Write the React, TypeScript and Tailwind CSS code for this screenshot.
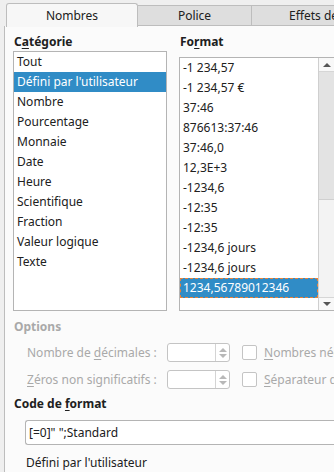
const categories = [
  'Tout',
  "Défini par l'utilisateur",
  'Nombre',
  'Pourcentage',
  'Monnaie',
  'Date',
  'Heure',
  'Scientifique',
  'Fraction',
  'Valeur logique',
  'Texte',
]

const formats = [
  '-1 234,57',
  '-1 234,57 €',
  '37:46',
  '876613:37:46',
  '37:46,0',
  '12,3E+3',
  '-1234,6',
  '-12:35',
  '-12:35',
  '-1234,6 jours',
  '-1234,6 jours',
  '1234,56789012346',
]

function SpinBox() {
  return (
    <div className="w-[63px] h-[19px] shrink-0 flex border border-[#c4c4c4] rounded-[3px] bg-white">
      <div className="flex-1" />
      <div className="w-[14px] flex flex-col items-center justify-center gap-[2px] border-l border-[#d4d4d4]">
        <div className="w-0 h-0 border-l-[4px] border-r-[4px] border-b-[4px] border-l-transparent border-r-transparent border-b-[#b8b8b8]" />
        <div className="w-0 h-0 border-l-[4px] border-r-[4px] border-t-[4px] border-l-transparent border-r-transparent border-t-[#b8b8b8]" />
      </div>
    </div>
  )
}

export default function App() {
  return (
    <div
      className="w-[334px] h-[472px] overflow-hidden bg-[#efefef] text-[12px] text-[#202020] flex flex-col"
      style={{ fontFamily: '"Noto Sans", "Open Sans", sans-serif' }}
    >
      {/* tabs */}
      <div className="h-[26px] flex items-end pl-[6px] shrink-0">
        <div className="w-[132px] h-[24px] shrink-0 bg-[#f7f7f7] border border-b-0 border-[#bdbdbd] rounded-t-[3px] flex items-center justify-center relative top-[1px] z-10">
          Nombres
        </div>
        <div className="w-[114px] h-[21px] shrink-0 bg-[#dedede] border border-l-0 border-[#bdbdbd] flex items-center justify-center">
          Police
        </div>
        <div className="flex-1 h-[21px] bg-[#dedede] border border-l-0 border-r-0 border-[#bdbdbd] flex items-center pl-[37px] whitespace-nowrap overflow-hidden">
          Effets de caractère
        </div>
      </div>

      {/* panel */}
      <div className="flex-1 ml-[4px] border-l border-[#bdbdbd] bg-[#fbfbfb] pl-[8px] pt-[8px]">
        <div className="flex">
          {/* category */}
          <div className="w-[154px] shrink-0 flex flex-col">
            <div className="h-[16px] leading-[16px] font-bold pl-[1px]">
              C<span className="underline underline-offset-2">a</span>tégorie
            </div>
            <div className="mt-[1px] h-[260px] border border-[#b4b4b4] bg-white">
              {categories.map((c, i) => (
                <div
                  key={i}
                  className={
                    'h-[20px] leading-[20px] pl-[3px] whitespace-nowrap ' +
                    (i === 1 ? 'bg-[#308cc6] text-white' : '')
                  }
                >
                  {c}
                </div>
              ))}
            </div>
          </div>

          {/* format */}
          <div className="ml-[12px] flex-1 flex flex-col">
            <div className="h-[16px] leading-[16px] font-bold pl-[1px]">
              Fo<span className="underline underline-offset-2">r</span>mat
            </div>
            <div className="mt-[7px] h-[254px] border border-r-0 border-[#b4b4b4] bg-white flex">
              <div className="flex-1 overflow-hidden">
                {formats.map((f, i) => (
                  <div
                    key={i}
                    className={
                      'h-[20px] leading-[18px] pl-[2px] whitespace-nowrap border ' +
                      (i === formats.length - 1
                        ? 'bg-[#308cc6] text-white border-dashed border-[#e8823a]'
                        : 'border-transparent')
                    }
                  >
                    {f}
                  </div>
                ))}
              </div>
              <div className="w-[16px] shrink-0 flex flex-col border-l border-[#cfcfcf] bg-[#f3f3f3]">
                <div className="h-[14px] flex items-center justify-center border-b border-[#d6d6d6] bg-[#f8f8f8]">
                  <div className="w-0 h-0 border-l-[4px] border-r-[4px] border-b-[4px] border-l-transparent border-r-transparent border-b-[#555555]" />
                </div>
                <div className="h-[128px] bg-[#e3e3e3] border-b border-[#d0d0d0]" />
                <div className="flex-1" />
                <div className="h-[13px] flex items-center justify-center border-t border-[#d6d6d6] bg-[#f8f8f8]">
                  <div className="w-0 h-0 border-l-[4px] border-r-[4px] border-t-[4px] border-l-transparent border-r-transparent border-t-[#555555]" />
                </div>
              </div>
            </div>
          </div>
        </div>

        {/* options */}
        <div className="mt-[8px] h-[16px] leading-[16px] font-bold text-[#a9a9a9] pl-[1px]">
          Options
        </div>
        <div className="pl-[14px] text-[#a9a9a9]">
          <div className="mt-[8px] flex items-center h-[19px] whitespace-nowrap">
            <div className="w-[140px] shrink-0">
              Nombre de <span className="underline underline-offset-2">d</span>écimales :
            </div>
            <SpinBox />
            <div className="ml-[12px] w-[15px] h-[15px] shrink-0 border border-[#c4c4c4] rounded-[2px] bg-white" />
            <div className="ml-[7px] shrink-0">
              <span className="underline underline-offset-2">N</span>ombres négatifs en rouge
            </div>
          </div>
          <div className="mt-[8px] flex items-center h-[19px] whitespace-nowrap">
            <div className="w-[140px] shrink-0">
              <span className="underline underline-offset-2">Z</span>éros non significatifs :
            </div>
            <SpinBox />
            <div className="ml-[12px] w-[15px] h-[15px] shrink-0 border border-[#c4c4c4] rounded-[2px] bg-white" />
            <div className="ml-[7px] shrink-0">
              <span className="underline underline-offset-2">S</span>éparateur de milliers
            </div>
          </div>
        </div>

        {/* format code */}
        <div className="mt-[7px] h-[16px] leading-[16px] font-bold pl-[1px]">
          Code de <span className="underline underline-offset-2">f</span>ormat
        </div>
        <div className="mt-[8px] ml-[12px] h-[25px] border border-r-0 border-[#b4b4b4] rounded-l-[3px] bg-white flex items-center pl-[3px] whitespace-nowrap">
          [=0]" ";Standard
        </div>
        <div className="mt-[9px] pl-[13px] whitespace-nowrap">Défini par l'utilisateur</div>
      </div>
    </div>
  )
}
